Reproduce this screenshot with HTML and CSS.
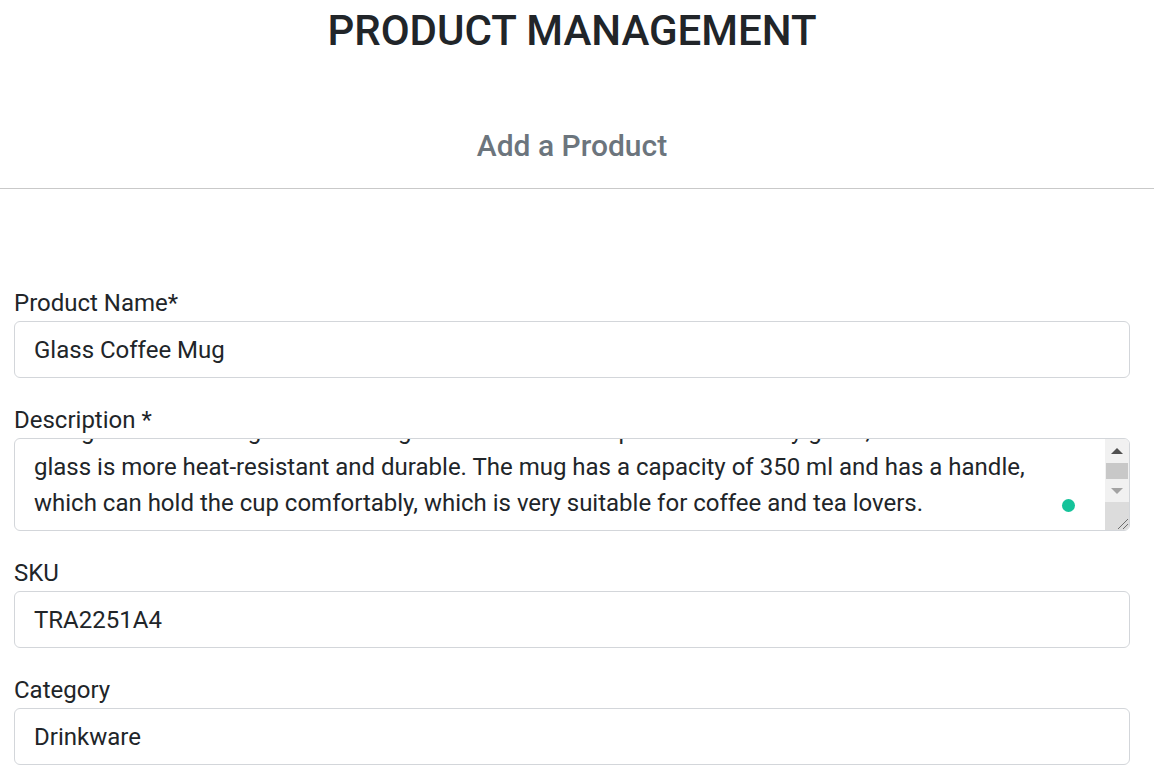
FILE: index.html
```html
<!DOCTYPE html>
<html lang="en">
<head>
<meta charset="utf-8">
<title>Product Management</title>
<link rel="stylesheet" href="styles.css">
</head>
<body>
<header class="page-head">
  <h1 class="page-title">PRODUCT MANAGEMENT</h1>
  <h2 class="page-subtitle">Add a Product</h2>
</header>
<hr class="divider">
<form class="product-form">
  <div class="form-group">
    <label class="form-label">Product Name*</label>
    <div class="form-control">Glass Coffee Mug</div>
  </div>
  <div class="form-group">
    <label class="form-label">Description *</label>
    <div class="textarea">
      <div class="textarea-text">
        <div class="textarea-lines">Using the best strong borosilicate glass to make the cup. Unlike ordinary glass, borosilicate<br>glass is more heat-resistant and durable. The mug has a capacity of 350 ml and has a handle,<br>which can hold the cup comfortably, which is very suitable for coffee and tea lovers.</div>
      </div>
      <div class="scrollbar">
        <div class="sb-button">
          <svg width="12" height="8" viewBox="0 0 12 8"><path d="M0 7 L6 1 L12 7 Z" fill="#505050"/></svg>
        </div>
        <div class="sb-track"><div class="sb-thumb"></div></div>
        <div class="sb-button">
          <svg width="12" height="8" viewBox="0 0 12 8"><path d="M0 1 L12 1 L6 7 Z" fill="#a3a3a3"/></svg>
        </div>
        <div class="sb-resizer">
          <svg width="12" height="12" viewBox="0 0 12 12"><path d="M12 2 L2 12 M12 7 L7 12" stroke="#6e6e6e" stroke-width="1"/></svg>
        </div>
      </div>
      <span class="grammar-dot"></span>
    </div>
  </div>
  <div class="form-group">
    <label class="form-label">SKU</label>
    <div class="form-control">TRA2251A4</div>
  </div>
  <div class="form-group">
    <label class="form-label">Category</label>
    <div class="form-control">Drinkware</div>
  </div>
</form>
</body>
</html>
```

FILE: styles.css
```css
* { box-sizing: border-box; }

html, body {
  margin: 0;
  padding: 0;
  background: #fff;
}

body {
  font-family: Roboto, "Liberation Sans", Arial, sans-serif;
  color: #212529;
  font-size: 24px;
  line-height: 1.5;
  overflow: hidden;
  height: 776px;
}

.page-head {
  padding: 6px 24px 0 14px;
  text-align: center;
}

.page-title {
  margin: 0;
  font-size: 42px;
  font-weight: 500;
  line-height: 1.2;
  color: #212529;
}

.page-subtitle {
  margin: 72px 0 0;
  font-size: 30px;
  font-weight: 500;
  line-height: 1.2;
  color: #6c757d;
}

.divider {
  margin: 24px 0 0;
  border: 0;
  border-top: 1px solid #c9c9c9;
}

.product-form {
  padding: 96px 24px 0 14px;
}

.form-group {
  margin-bottom: 24px;
}

.form-label {
  display: block;
  line-height: 36px;
}

.form-control {
  height: 57px;
  padding: 10px 19px 8px;
  border: 1px solid #d3d6da;
  border-radius: 6px;
  line-height: 37px;
  color: #212529;
}

.textarea {
  position: relative;
  display: flex;
  height: 93px;
  border: 1px solid #d3d6da;
  border-radius: 6px;
  overflow: hidden;
}

.textarea-text {
  flex: 1;
  display: flex;
  flex-direction: column;
  justify-content: flex-end;
  padding: 0 19px 9px;
  overflow: hidden;
}

.textarea-lines {
  line-height: 36px;
  white-space: nowrap;
}

.scrollbar {
  width: 24px;
  display: flex;
  flex-direction: column;
  background: #f1f1f1;
}

.sb-button {
  height: 23px;
  display: flex;
  align-items: center;
  justify-content: center;
}

.sb-track {
  flex: 1;
  display: flex;
  flex-direction: column;
  justify-content: flex-end;
  padding: 0 1px;
}

.sb-thumb {
  height: 16px;
  background: #c8c8c8;
}

.sb-resizer {
  height: 28px;
  background: #dcdcdc;
  display: flex;
  align-items: flex-end;
  justify-content: flex-end;
  padding: 0 1px 1px 0;
}

.grammar-dot {
  position: absolute;
  left: 1047px;
  top: 60px;
  width: 13px;
  height: 13px;
  border-radius: 50%;
  background: #15c39a;
}
```
